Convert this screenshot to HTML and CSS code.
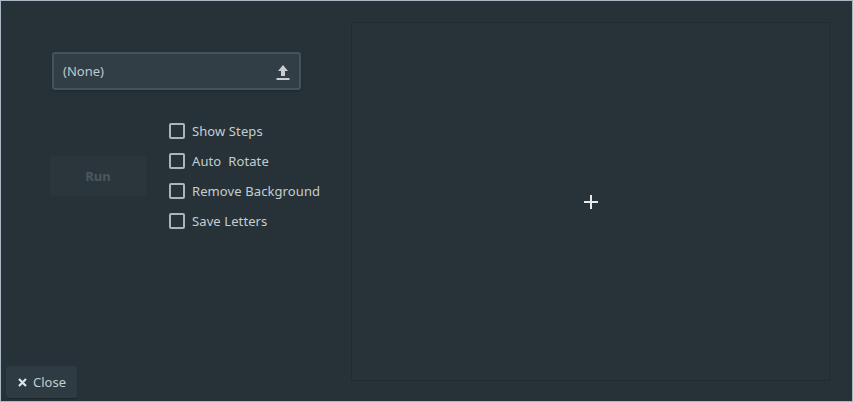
FILE: index.html
```html
<!DOCTYPE html>
<html>
<head>
<meta charset="utf-8">
<link rel="stylesheet" href="styles.css">
</head>
<body>
<div class="window">
  <div class="left">
    <div class="combo">
      <span class="combo-text">(None)</span>
      <svg class="upload" width="14" height="16" viewBox="0 0 14 16">
        <path d="M7 1 L12 7 L9 7 L9 12 L5 12 L5 7 L2 7 Z" fill="#c7ced2"/>
        <rect x="0.5" y="14" width="13" height="2" fill="#c7ced2"/>
      </svg>
    </div>
    <div class="controls">
      <button class="run">Run</button>
      <div class="checks">
        <label class="check"><span class="box"></span><span>Show Steps</span></label>
        <label class="check"><span class="box"></span><span>Auto&nbsp; Rotate</span></label>
        <label class="check"><span class="box"></span><span>Remove Background</span></label>
        <label class="check"><span class="box"></span><span>Save Letters</span></label>
      </div>
    </div>
    <button class="close">
      <svg width="9" height="9" viewBox="0 0 9 9"><path d="M1 1 L8 8 M8 1 L1 8" stroke="#dfe4e6" stroke-width="2.2"/></svg>
      <span>Close</span>
    </button>
  </div>
  <div class="canvas">
    <svg width="14" height="14" viewBox="0 0 14 14"><rect x="0" y="6" width="14" height="2" fill="#e6e9ea"/><rect x="6" y="0" width="2" height="14" fill="#e6e9ea"/></svg>
  </div>
</div>
</body>
</html>
```
FILE: styles.css
```css
html, body {
  margin: 0;
  padding: 0;
  background: #263238;
}
body {
  font-family: "Noto Sans", "DejaVu Sans", sans-serif;
  font-size: 13px;
  color: #c5cdd1;
}
.window {
  width: 853px;
  height: 402px;
  box-sizing: border-box;
  border: 1px solid #aab6c3;
  background: #263238;
  display: flex;
}
.left {
  width: 350px;
  display: flex;
  flex-direction: column;
  padding-left: 49px;
  box-sizing: border-box;
}
.combo {
  margin-top: 51px;
  margin-left: 2px;
  width: 249px;
  height: 38px;
  box-sizing: border-box;
  background: #313e45;
  border: 2px solid #465359;
  border-radius: 3px;
  display: flex;
  align-items: center;
  justify-content: space-between;
  padding: 0 9px 0 9px;
  box-shadow: 0 1px 2px rgba(0,0,0,0.25);
}
.combo-text {
  color: #c0c8cc;
}
.upload {
  margin-top: 2px;
}
.controls {
  margin-top: 26px;
  display: flex;
  align-items: center;
}
.run {
  width: 96px;
  height: 40px;
  background: #2b363c;
  border: none;
  border-radius: 2px;
  font-family: inherit;
  font-size: 13px;
  font-weight: bold;
  color: #4b575d;
  padding: 0;
  margin-right: 23px;
}
.checks {
  display: flex;
  flex-direction: column;
}
.check {
  height: 30px;
  display: flex;
  align-items: center;
  gap: 7px;
  color: #c5cdd1;
  letter-spacing: 0.1px;
}
.box {
  width: 16px;
  height: 16px;
  box-sizing: border-box;
  border: 2px solid #aab4b9;
  border-radius: 2px;
}
.close {
  margin-top: auto;
  margin-bottom: 3px;
  margin-left: -44px;
  width: 71px;
  height: 32px;
  background: #2f3b42;
  border: none;
  border-radius: 3px;
  display: flex;
  align-items: center;
  gap: 6px;
  padding: 0 0 0 12px;
  font-family: inherit;
  font-size: 13px;
  color: #c5cdd1;
  box-shadow: 0 1px 1px rgba(0,0,0,0.25);
}
.canvas {
  flex: 1;
  margin: 21px 22px 20px 0;
  border: 1px solid #222b30;
  background: #273338;
  display: flex;
  align-items: center;
  justify-content: center;
}
```
